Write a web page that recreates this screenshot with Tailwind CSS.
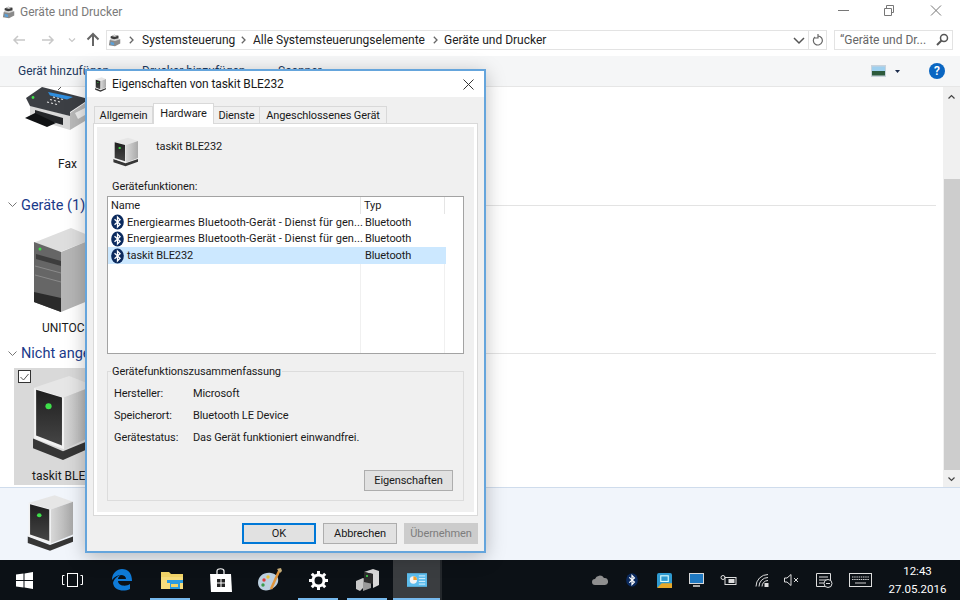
<!DOCTYPE html>
<html lang="de">
<head>
<meta charset="UTF-8">
<title>Geräte und Drucker</title>
<script src="https://cdn.jsdelivr.net/npm/@tailwindcss/browser@4"></script>
</head>
<body class="relative w-[960px] h-[600px] overflow-hidden bg-white font-['Roboto',sans-serif] text-[11px] tracking-[-.1px] text-[#1a1a1a]">
<svg class="absolute w-0 h-0">
  <defs>
    <linearGradient id="side" x1="0" y1="0" x2="1" y2="0"><stop offset="0" stop-color="#d8d8d8"/><stop offset="1" stop-color="#a9a9a9"/></linearGradient>
    <linearGradient id="front" x1="0" y1="0" x2="0" y2="1"><stop offset="0" stop-color="#1f1f1f"/><stop offset="1" stop-color="#454545"/></linearGradient>
  </defs>
  <symbol id="device" viewBox="0 0 60 90" preserveAspectRatio="none">
    <polygon points="1,66 30,79 60,66 60,74 30,88 1,76" fill="#363636"/>
    <polygon points="2,14 36,2 60,12 31,24" fill="#e6e6e6"/>
    <polygon points="31,24 60,12 60,63 31,77" fill="url(#side)"/>
    <polygon points="2,14 31,24 31,77 2,66" fill="#f2f2f2"/>
    <polygon points="4,16 29,24 29,73 4,63" fill="url(#front)"/>
    <circle cx="16" cy="33" r="3" fill="#3ee04a"/>
  </symbol>
  <symbol id="bt" viewBox="0 0 14 16">
    <ellipse cx="7" cy="8" rx="6.800" ry="8" fill="#0b2a5e"/>
    <path d="M3.800 5l6 5.500L7 13.300V2.700l2.800 2.800L3.800 11" fill="none" stroke="#fff" stroke-width="1.400"/>
  </symbol>
  <symbol id="cp" viewBox="0 0 16 16">
    <path d="M1 14l1-6 5-3 7 2v5l-6 3z" fill="#8a8a8a"/>
    <path d="M2 8l5-3 7 2-6 2z" fill="#d5d5d5"/>
    <path d="M3 4l4-2 5 1v3l-5 1-4-1z" fill="#3c3c3c"/>
    <path d="M4 3.500l3-1.200 4 .8-3 1.200z" fill="#eee"/>
    <path d="M3 10l4 1v3l-4-1z" fill="#5aa0d8"/>
  </symbol>
  <symbol id="crumb" viewBox="0 0 5 8"><path d="M.8.800L4 4 .8 7.200" fill="none" stroke="#666" stroke-width="1.300"/></symbol>
</svg>

<!-- Explorer window -->
<div class="h-[560px] flex flex-col tracking-normal">
  <div class="h-[24px] flex items-center pl-[2px] gap-[4px]">
    <svg class="w-[14px] h-[14px]"><use href="#cp"/></svg>
    <span class="text-[12px] text-[#7a7a7a]">Geräte und Drucker</span>
    <div class="ml-auto flex items-center">
      <svg class="w-[46px] h-[24px]" viewBox="0 0 46 24"><path d="M16 10.500h11" stroke="#777"/></svg>
      <svg class="w-[46px] h-[24px]" viewBox="0 0 46 24"><path d="M16.500 8.500h7v7h-7zM18.500 8.500v-3h7v7h-2" fill="none" stroke="#777"/></svg>
      <svg class="w-[46px] h-[24px]" viewBox="0 0 46 24"><path d="M17 5.500l10 10M27 5.500l-10 10" stroke="#777"/></svg>
    </div>
  </div>
  <div class="h-[32px] flex items-center pb-[1px]">
    <div class="w-[106px] flex items-center relative h-full">
      <svg class="w-[106px] h-[24px]" viewBox="0 0 106 24">
        <path d="M14 16h11M18 12l-4 4 4 4" transform="translate(0,-4)" fill="none" stroke="#c8c8c8" stroke-width="1.500"/>
        <path d="M42 16h11M49 12l4 4-4 4" transform="translate(0,-4)" fill="none" stroke="#c8c8c8" stroke-width="1.500"/>
        <path d="M69 10.500l3 3 3-3" fill="none" stroke="#c8c8c8" stroke-width="1.200"/>
        <path d="M93 18V6M87.500 11.500L93 6l5.500 5.500" fill="none" stroke="#666" stroke-width="2"/>
      </svg>
    </div>
    <div class="w-[721px] h-[20px] border border-[#e3e3e3] flex items-center pl-[1px]">
      <svg class="w-[14px] h-[14px] mr-[7px]"><use href="#cp"/></svg>
      <div class="text-[12px] text-[#222] flex items-center">
        <svg class="w-[5px] h-[8px] mr-[8px]"><use href="#crumb"/></svg>
        <span class="w-[99px]">Systemsteuerung</span>
        <svg class="w-[5px] h-[8px] mr-[7px]"><use href="#crumb"/></svg>
        <span class="w-[180px]">Alle Systemsteuerungselemente</span>
        <svg class="w-[5px] h-[8px] mr-[6px]"><use href="#crumb"/></svg>
        <span>Geräte und Drucker</span>
      </div>
      <div class="ml-auto flex h-full items-center">
        <svg class="w-[14px] h-[18px]" viewBox="0 0 14 18"><path d="M2 7l5 5 5-5" fill="none" stroke="#555" stroke-width="1.500"/></svg>
        <div class="border-l border-[#e3e3e3] w-[18px] h-full flex items-center justify-center ml-[2px]">
          <svg class="w-[12px] h-[12px]" viewBox="0 0 12 12"><path d="M3 3a4.500 4.500 0 1 0 3-1M6 0v4H2" fill="none" stroke="#666" stroke-width="1.200"/></svg>
        </div>
      </div>
    </div>
    <div class="ml-[7px] w-[119px] h-[20px] border border-[#e3e3e3] flex items-center pl-[5px] text-[12px] text-[#666]">
      <span>“Geräte und Dr...</span>
      <svg class="ml-auto mr-[3px] w-[13px] h-[13px]" viewBox="0 0 13 13"><circle cx="8" cy="5" r="3.500" fill="none" stroke="#555" stroke-width="1.500"/><path d="M5.500 7.500L1 12" stroke="#555" stroke-width="2"/></svg>
    </div>
  </div>
  <div class="h-[31px] bg-[#f5f6f7] border-b border-[#e6e6e6] flex items-center pl-[18px] text-[12px] text-[#1e3a5f] relative">
    <span class="w-[124px] whitespace-nowrap">Gerät hinzufügen</span>
    <span class="w-[136px] whitespace-nowrap">Drucker hinzufügen</span>
    <span>Scanner</span>
    <svg class="ml-auto w-[15px] h-[12px]" viewBox="0 0 15 12"><rect width="15" height="12" fill="#c9d3dc"/><rect x="1" y="1.500" width="13" height="4.500" fill="#9fd0ef"/><rect x="1" y="6" width="13" height="4.500" fill="#2c5a3c"/></svg>
    <svg class="ml-[9px] w-[5px] h-[3px]" viewBox="0 0 5 3"><path d="M0 0h5L2.500 3z" fill="#1a2a4a"/></svg>
    <div class="ml-[29px] mr-[15px] w-[16px] h-[16px] rounded-full bg-[#0a66c2] text-white text-[12px] font-semibold flex items-center justify-center">?</div>
  </div>
  <div class="flex h-[400px]">
    <div class="flex-1 min-w-0 flex flex-col">
      <div class="h-[103px] relative overflow-hidden">
        <svg class="ml-[20px] w-[66px] h-[53px]" viewBox="0 2 66 53">
          <path d="M42 1l-4 4" stroke="#555"/>
          <polygon points="10,20 50,31 50,45 10,33" fill="#d9d9d9"/>
          <polygon points="50,28 65,18 65,36 50,45" fill="#b9b9b9"/>
          <polygon points="6,13 22,2 65,13 65,17 50,27 50,31 10,21" fill="#3c3f44"/>
          <polygon points="15,25 43,33 43,40 15,32" fill="#25272a"/>
          <polygon points="5,33 15,28 36,38 27,42" fill="#101214"/>
          <polygon points="28,7 53,12 47,14.500 30,10.500" fill="#2f8fe0"/>
          <polygon points="55,28 65,23 65,30 58,34" fill="#eeeeee"/>
          <circle cx="13" cy="12.500" r="1.400" fill="#3ee04a"/>
          <path d="M33 12l2 .5M37 13l2 .5M41 14l2 .5M30 14.500l2 .5M34 15.500l2 .5M38 16.500l2 .5M27 17l2 .5M31 18l2 .5M35 19l2 .5" stroke="#e0e0e0" stroke-width="1.200"/>
        </svg>
        <div class="absolute left-[58px] top-[68px] text-[12px]">Fax</div>
      </div>
      <div class="h-[30px] flex items-center pl-[8px] gap-[4px]">
        <svg class="w-[9px] h-[6px]" viewBox="0 0 9 6"><path d="M.500.500l4 4 4-4" fill="none" stroke="#777"/></svg>
        <span class="text-[14.500px] text-[#1a3a8a] whitespace-nowrap mt-[1px]">Geräte (1)</span>
        <div class="flex-1 h-px bg-[#e3e3e3] mr-[7px]"></div>
      </div>
      <div class="h-[133px] relative overflow-hidden">
        <svg class="ml-[33px] mt-[8px] w-[62px] h-[84px]" viewBox="0 0 62 84">
          <polygon points="0,15 27,24 62,10 38,0" fill="#dedede"/>
          <polygon points="28,24 62,10 62,70 28,84" fill="#b5b5b5"/>
          <polygon points="1,14 28,24 28,84 1,74" fill="#666"/>
          <polygon points="1,64 28,70 28,84 1,74" fill="#2a2a2a"/>
          <polygon points="3,26 28,33 28,38 3,31" fill="#3d3d3d"/>
          <path d="M2 38l26 7M2 47l26 7" stroke="#8a8a8a"/>
          <circle cx="7" cy="21" r="1.500" fill="#3ee04a"/>
        </svg>
        <div class="absolute left-[42px] top-[99px] text-[12px]">UNITOCK</div>
      </div>
      <div class="h-[15px] -mt-[7px] mb-[7px] flex items-center pl-[8px] gap-[4px]">
        <svg class="w-[9px] h-[6px]" viewBox="0 0 9 6"><path d="M.500.500l4 4 4-4" fill="none" stroke="#777"/></svg>
        <span class="text-[14.500px] text-[#1a3a8a] whitespace-nowrap">Nicht angegeben (1)</span>
        <div class="flex-1 h-px bg-[#e3e3e3] mr-[7px]"></div>
      </div>
      <div class="ml-[14px] w-[90px] h-[117px] bg-[#d9d9d9] relative">
        <div class="absolute left-[4px] top-[2px] w-[13px] h-[13px] bg-white border border-[#333] flex items-center justify-center">
          <svg class="w-[9px] h-[8px]" viewBox="0 0 9 8"><path d="M.500 4l3 3 5-6" fill="none" stroke="#555"/></svg>
        </div>
        <svg class="absolute left-[18px] top-[6px] w-[62px] h-[88px]"><use href="#device"/></svg>
        <div class="absolute left-[18px] top-[99px] text-[12px] whitespace-nowrap">taskit BLE232</div>
      </div>
    </div>
    <div class="w-[17px] bg-[#f0f0f0] flex flex-col items-center">
      <svg class="w-[17px] h-[17px] mt-[2px] mb-[73px]" viewBox="0 0 17 17"><path d="M5.500 9.500l3-3 3 3" fill="none" stroke="#444" stroke-width="1.200"/></svg>
      <div class="w-[16px] h-[291px] bg-[#cdcdcd]"></div>
      <svg class="w-[17px] h-[17px]" viewBox="0 0 17 17"><path d="M5.500 7.500l3 3 3-3" fill="none" stroke="#444" stroke-width="1.200"/></svg>
    </div>
  </div>
  <div class="flex-1 bg-[#f1f5fb] border-t border-[#cfdcec] pl-[27px] pt-[6px]">
    <svg class="w-[46px] h-[58px]"><use href="#device"/></svg>
  </div>
</div>

<!-- Taskbar -->
<div class="h-[40px] bg-[#0c1116] flex items-stretch relative tracking-normal">
  <div class="w-[48px] flex items-center justify-center">
    <svg class="w-[17px] h-[17px]" viewBox="0 0 17 17"><path d="M0 2.500l7.500-1V8H0zM8.500 1.400L17 0v8H8.500zM0 9h7.500v6.500l-7.500-1zM8.500 9H17v8l-8.500-1.400z" fill="#fff"/></svg>
  </div>
  <div class="w-[48px] flex items-center justify-center">
    <svg class="w-[21px] h-[14px]" viewBox="0 0 21 14"><rect x="5.500" y=".5" width="10" height="13" fill="none" stroke="#fff"/><path d="M2.500 2.500H.5v9h2M18.500 2.500h2v9h-2" fill="none" stroke="#fff"/></svg>
  </div>
  <div class="w-[51px] flex items-center justify-center">
    <svg class="w-[21px] h-[22px]" viewBox="0 0 21 22"><path d="M1 11C1 4 6 0 11 0c6 0 10 4 10 12H7c0 5 8 6 12 3v5c-6 3-16 2-17-6 1-4 4-7 8-8-2 1-3 3-3 4h8c0-5-9-6-14 1z" fill="#0f7bd8"/></svg>
  </div>
  <div class="w-[49px] flex items-center justify-center">
    <svg class="w-[22px] h-[18px]" viewBox="0 0 22 18"><path d="M0 1h8l2 2h12v15H0z" fill="#f2d468"/><path d="M0 6h22v12H0z" fill="#f7dd7c"/><path d="M6 9h16v3h-3v6H9v-6H6z" fill="#2b9be0"/><rect x="10" y="13" width="7" height="3" fill="#f2d468"/></svg>
  </div>
  <div class="w-[49px] flex items-center justify-center">
    <svg class="w-[22px] h-[24px]" viewBox="0 0 22 24"><path d="M7 6V3c0-3 7-3 7 0v3" fill="none" stroke="#fff" stroke-width="1.200"/><path d="M0 6h21l1 18H1z" fill="#fff"/><path d="M7 11h3.500v3.500H7zM11.500 11H15v3.500h-3.500zM7 15.500h3.500V19H7zM11.500 15.500H15V19h-3.500z" fill="#222"/></svg>
  </div>
  <div class="w-[49px] flex items-center justify-center">
    <svg class="w-[24px] h-[24px]" viewBox="0 0 24 24"><path d="M0 15C0 8 6 4 13 5c6 1 8 5 7 9-1 5-9 10-15 8-3-1-5-4-5-7z" fill="#bcd0e0"/><circle cx="6" cy="12" r="1.700" fill="#e03c3c"/><circle cx="10" cy="9" r="1.700" fill="#e8c43c"/><circle cx="5" cy="17" r="1.700" fill="#3c9a4c"/><path d="M22 1l-9 20" stroke="#e0953c" stroke-width="2.500"/><path d="M19 1l4-1 1 3-2 2z" fill="#c9b07a"/></svg>
  </div>
  <div class="w-[49px] flex items-center justify-center">
    <svg class="w-[19px] h-[19px]" viewBox="0 0 19 19"><circle cx="9.500" cy="9.500" r="5.500" fill="none" stroke="#fff" stroke-width="3"/><path d="M9.500 0v4M9.500 15v4M0 9.500h4M15 9.500h4M2.800 2.800l2.800 2.800M13.400 13.400l2.800 2.800M2.800 16.200l2.800-2.800M13.400 5.600l2.800-2.800" stroke="#fff" stroke-width="3"/></svg>
  </div>
  <div class="w-[49px] flex items-center justify-center">
    <svg class="w-[23px] h-[22px]" viewBox="0 0 23 22"><path d="M0 12l7-3v10l-3 3-4-2z" fill="#c8c8c8"/><path d="M7 9l8 3v7l-8 3z" fill="#9a9a9a"/><path d="M8 3l9-3 6 2v14l-6 3V5z" fill="#d8d8d8"/><path d="M8 3l9 2v10l-9-2z" fill="#2c2c2c"/><circle cx="11" cy="7" r="1" fill="#3ee04a"/></svg>
  </div>
  <div class="ml-[1px] w-[47px] bg-[#3a3d40] flex items-center justify-center">
    <svg class="w-[20px] h-[14px]" viewBox="0 0 22 15"><rect width="22" height="15" fill="#5cbcec"/><circle cx="7" cy="7.500" r="4" fill="#f4f4f4"/><path d="M7 7.500V3.500a4 4 0 0 1 4 4z" fill="#f0a030"/><path d="M13 3h7M13 6h7M13 9h7M13 12h7" stroke="#e8f6ff"/></svg>
  </div>
  <div class="w-[2px] bg-[#24282c]"></div>

  <!-- tray -->
  <div class="ml-auto flex items-center">
    <svg class="w-[16px] h-[10px] mr-[18px]" viewBox="0 0 16 10"><path d="M3 10a3 3 0 0 1 0-6 5 5 0 0 1 9-1 3.500 3.500 0 0 1 1 7z" fill="#8f8f8f"/></svg>
    <svg class="w-[12px] h-[14px] mr-[19px]"><use href="#bt"/></svg>
    <svg class="w-[15px] h-[15px] mr-[17px]" viewBox="0 0 16 16"><rect width="16" height="16" rx="2" fill="#2f9ad0"/><path d="M0 16l5-5h11v5z" fill="#e8a828"/><rect x="4" y="3" width="8" height="6" fill="none" stroke="#dff" stroke-width="1.200"/></svg>
    <svg class="w-[15px] h-[15px] mr-[16px]" viewBox="0 0 15 15"><rect width="15" height="11" fill="#d8d8d8"/><rect x="1" y="1" width="13" height="9" fill="#1f78c0"/><rect x="4" y="12" width="7" height="2" fill="#aaa"/></svg>
    <svg class="w-[17px] h-[11px] mr-[18px]" viewBox="0 0 16 11"><rect x="4.500" y="2.500" width="11" height="7" fill="none" stroke="#ddd"/><rect x="8" y="4" width="6" height="4" fill="#ddd"/><circle cx="2.500" cy="2.500" r="2" fill="none" stroke="#ddd"/></svg>
    <svg class="w-[14px] h-[13px] mr-[15px]" viewBox="0 0 13 13"><path d="M.5 12.500a12 12 0 0 1 12-12M3.500 12.500a9 9 0 0 1 9-9M6.500 12.500a6 6 0 0 1 6-6" fill="none" stroke="#ddd"/><rect x="9" y="9" width="4" height="4" fill="#ddd"/></svg>
    <svg class="w-[15px] h-[12px] mr-[17px]" viewBox="0 0 15 12"><path d="M.5 4h2.500l4-3.500v11L3 8H.5z" fill="none" stroke="#ddd"/><path d="M10 4l4 4M14 4l-4 4" stroke="#ddd"/></svg>
    <svg class="w-[17px] h-[15px] mr-[16px]" viewBox="0 0 17 15"><path d="M.5.500h14v9M.5.500v13h9M3 4h9M3 7h9M3 10h5" fill="none" stroke="#ddd"/><circle cx="12" cy="10.500" r="4" fill="#0c1116" stroke="#ddd"/><path d="M10 10.500h4" stroke="#ddd"/></svg>
    <svg class="w-[23px] h-[14px] mr-[12px]" viewBox="0 0 23 14"><rect x=".5" y=".5" width="22" height="13" fill="none" stroke="#ddd"/><path d="M3 4h17M3 6.500h17" stroke="#ccc" stroke-dasharray="1.500 .7"/><path d="M6 10h11" stroke="#ccc"/></svg>
    <div class="w-[67px] text-center text-white text-[11.500px] leading-[18px]"><div>12:43</div><div>27.05.2016</div></div>
    <div class="w-[9px]"></div>
  </div>
  <!-- running indicators -->
  <div class="absolute left-[150px] bottom-0 w-[40px] h-[2px] bg-[#76b9ed]"></div>
  <div class="absolute left-[298px] bottom-0 w-[40px] h-[2px] bg-[#76b9ed]"></div>
  <div class="absolute left-[347px] bottom-0 w-[40px] h-[2px] bg-[#76b9ed]"></div>
  <div class="absolute left-[393px] bottom-0 w-[47px] h-[2px] bg-[#76b9ed]"></div>
</div>

<!-- Properties dialog -->
<div class="absolute left-[85px] top-[69px] w-[401px] h-[484px] border-2 border-[#65a5dc] bg-[#f0f0f0] shadow-[0_4px_18px_rgba(0,0,0,.25)] flex flex-col">
  <div class="h-[26px] bg-white flex items-center pl-[8px] shrink-0">
    <svg class="w-[11px] h-[15px] mr-[6px]"><use href="#device"/></svg>
    <span class="text-[12px]">Eigenschaften von taskit BLE232</span>
    <svg class="ml-auto mr-[10px] w-[11px] h-[11px]" viewBox="0 0 11 11"><path d="M.5.500l10 10M10.500.500l-10 10" stroke="#333"/></svg>
  </div>
  <div class="h-[27px] flex items-end pl-[7px] shrink-0 relative z-10 -mb-px">
    <div class="w-[59px] h-[18px] border border-b-0 border-[#d9d9d9] pt-[2px] flex items-center justify-center">Allgemein</div>
    <div class="w-[61px] h-[21px] border border-b-0 border-[#d9d9d9] bg-white flex items-start pt-[2px] justify-center">Hardware</div>
    <div class="w-[46px] h-[18px] border border-l-0 border-b-0 border-[#d9d9d9] pt-[2px] flex items-center justify-center">Dienste</div>
    <div class="w-[127px] h-[18px] border border-l-0 border-b-0 border-[#d9d9d9] pt-[2px] flex items-center justify-center">Angeschlossenes Gerät</div>
  </div>
  <div class="mx-[6px] h-[393px] shrink-0 border border-[#d9d9d9] bg-white p-[3px]">
    <div class="h-full bg-[#f0f0f0] px-[10px] relative flex flex-col">
      <div class="h-[54px] flex items-start pl-[6px] pt-[10px] shrink-0">
        <svg class="w-[25px] h-[30px]"><use href="#device"/></svg>
        <span class="ml-[18px] mt-[2px]">taskit BLE232</span>
      </div>
      <div class="pl-[5px] h-[10px] pt-[2px] flex items-center shrink-0">Gerätefunktionen:</div>
      <div class="mt-[5px] h-[158px] shrink-0 border border-[#a3a3a3] bg-white flex flex-col">
        <div class="h-[17px] flex items-center relative">
          <div class="w-[253px] border-r border-[#e5e5e5] h-full pl-[3px] pt-[2px] flex items-center">Name</div>
          <div class="w-[84px] border-r border-[#e5e5e5] h-full pl-[3px] pt-[2px] flex items-center">Typ</div>
        </div>
        <div class="w-[338px] h-[16px] flex items-center pl-[3px]">
          <svg class="w-[13px] h-[16px] mr-[3px]"><use href="#bt"/></svg>
          <span class="w-[238px] whitespace-nowrap tracking-[.08px] pt-[2px]">Energiearmes Bluetooth-Gerät - Dienst für gen...</span><span class="pt-[2px]">Bluetooth</span>
        </div>
        <div class="w-[338px] h-[17px] flex items-center pl-[3px]">
          <svg class="w-[13px] h-[16px] mr-[3px]"><use href="#bt"/></svg>
          <span class="w-[238px] whitespace-nowrap tracking-[.08px] pt-[1px]">Energiearmes Bluetooth-Gerät - Dienst für gen...</span><span class="pt-[1px]">Bluetooth</span>
        </div>
        <div class="w-[338px] h-[17px] flex items-center pl-[3px] bg-[#cce8ff]">
          <svg class="w-[13px] h-[16px] mr-[3px]"><use href="#bt"/></svg>
          <span class="w-[238px] whitespace-nowrap pt-[1px]">taskit BLE232</span><span class="pt-[1px]">Bluetooth</span>
        </div>
        <div class="flex-1 flex">
          <div class="w-[253px] border-r border-[#f0f0f0]"></div>
          <div class="w-[84px] border-r border-[#f0f0f0]"></div>
        </div>
      </div>
      <div class="mt-[17px] h-[130px] shrink-0 border border-[#dcdcdc] pl-[6px] pt-[14px] relative">
        <div class="absolute left-[3px] -top-[7px] px-[1px] bg-[#f0f0f0] leading-[14px]">Gerätefunktionszusammenfassung</div>
        <div class="grid grid-cols-[79px_1fr] gap-y-[6px] leading-[16px]">
          <span>Hersteller:</span><span>Microsoft</span>
          <span>Speicherort:</span><span>Bluetooth LE Device</span>
          <span>Gerätestatus:</span><span>Das Gerät funktioniert einwandfrei.</span>
        </div>
        <button class="absolute right-[10px] bottom-[9px] w-[89px] h-[21px] bg-[#e1e1e1] border border-[#adadad] pt-[2px] flex items-center justify-center">Eigenschaften</button>
      </div>
    </div>
  </div>
  <div class="flex justify-end gap-[7px] pr-[6px] pt-[7px]">
    <button class="w-[74px] h-[21px] bg-[#e1e1e1] border-2 border-[#0078d7] pt-[2px] flex items-center justify-center">OK</button>
    <button class="w-[74px] h-[21px] bg-[#e1e1e1] border border-[#adadad] pt-[2px] flex items-center justify-center">Abbrechen</button>
    <button class="w-[74px] h-[21px] bg-[#cccccc] text-[#7d7d7d] pt-[2px] flex items-center justify-center">Übernehmen</button>
  </div>
</div>
</body>
</html>
